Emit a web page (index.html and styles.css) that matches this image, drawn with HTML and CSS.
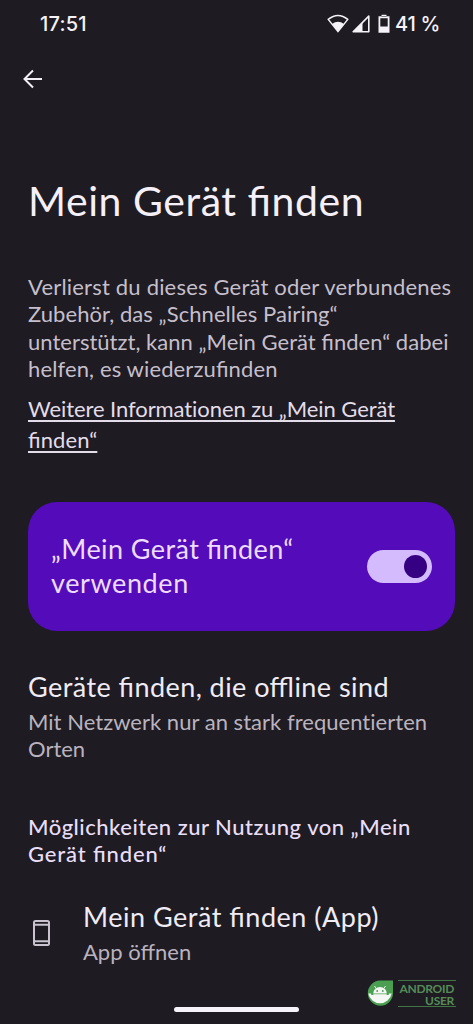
FILE: index.html
```
<!DOCTYPE html>
<html lang="de">
<head>
<meta charset="utf-8">
<title>Mein Gerät finden</title>
<link rel="stylesheet" href="styles.css">
</head>
<body>
<div class="screen">
  <header class="status">
    <span class="clock">17:51</span>
    <div class="status-right">
      <svg class="wifi" width="22" height="20" viewBox="0 0 22 20"><path d="M1.2 5.4Q11-2.6 20.8 5.4L11 17.6Z" fill="none" stroke="#f5f2f8" stroke-width="1.5" stroke-linejoin="round"/><path d="M5 9.9Q11 5.4 17 9.9L11 17.6Z" fill="#f5f2f8"/></svg>
      <svg class="signal" width="20" height="20" viewBox="0 0 20 20"><path d="M2.2 17.7L17.8 2.1V17.7Z" fill="none" stroke="#f5f2f8" stroke-width="1.6" stroke-linejoin="round"/><path d="M1.5 18L11.5 8.5V18Z" fill="#f5f2f8"/></svg>
      <svg class="battery" width="12" height="20" viewBox="0 0 12 20"><path d="M3.5 0.7h5v2h-5zM0.5 2.3h11v16.5h-11zM2.3 4.3v8.2h7.4V4.3z" fill="#f5f2f8" fill-rule="evenodd"/></svg>
      <span class="percent">41 %</span>
    </div>
  </header>
  <nav class="toolbar">
    <svg width="20" height="20" viewBox="0 0 20 20"><path d="M19 10H1.5M10 1.5L1.5 10L10 18.5" fill="none" stroke="#f2eff6" stroke-width="2"/></svg>
  </nav>
  <main>
    <h1 class="title"><span class="t1">Mein Gerät finden</span></h1>
    <p class="intro"><span class="i1">Verlierst du dieses Gerät oder verbundenes</span><br><span class="i2">Zubehör, das „Schnelles Pairing“</span><br><span class="i3">unterstützt, kann „Mein Gerät finden“ dabei</span><br><span class="i4">helfen, es wiederzufinden</span></p>
    <a class="more"><span class="l1">Weitere Informationen zu „Mein Gerät</span><br><span class="l2">finden“</span></a>
    <section class="card">
      <div class="card-text"><span class="c1">„Mein Gerät finden“</span><br><span class="c2">verwenden</span></div>
      <div class="switch"><div class="thumb"></div></div>
    </section>
    <section class="offline">
      <div class="item-title"><span class="o1">Geräte finden, die offline sind</span></div>
      <div class="item-sub"><span class="o2">Mit Netzwerk nur an stark frequentierten</span><br><span class="o3">Orten</span></div>
    </section>
    <h2 class="group"><span class="g1">Möglichkeiten zur Nutzung von „Mein</span><br><span class="g2">Gerät finden“</span></h2>
    <section class="app">
      <svg class="phone" width="17" height="26" viewBox="0 0 17 26"><rect x="1" y="1" width="15" height="24" rx="1.5" fill="none" stroke="#c8c3ce" stroke-width="2"/><path d="M1 4.7h15M1 21.2h15" stroke="#c8c3ce" stroke-width="1.9"/></svg>
      <div>
        <div class="item-title"><span class="a1">Mein Gerät finden (App)</span></div>
        <div class="item-sub"><span class="a2">App öffnen</span></div>
      </div>
    </section>
  </main>
  <div class="home-bar"></div>
  <div class="brand">
    <svg width="28" height="28" viewBox="0 0 28 28"><path d="M14 1.5H27V14.5A12.6 12.6 0 1 1 14 1.5Z" fill="#4a9f51"/><path d="M2.3 14.5h2.9v1.5h17.6v-1.5H25.7A11.9 11.9 0 0 1 2.3 14.5Z" fill="#f4f7f3"/><path d="M7.3 17V14A6.7 6 0 0 1 20.7 14V17Z" fill="#f4f7f3"/><path d="M10 9.2L8.5 7M18 9.2L19.5 7" stroke="#f4f7f3"/><path d="M6.7 14.8h14.6" stroke="#4a9f51" stroke-width=".7"/><circle cx="11.2" cy="12" r=".9" fill="#4a9f51"/><circle cx="16.8" cy="12" r=".9" fill="#4a9f51"/></svg>
    <div class="brand-name"><span>ANDROID</span><span>USER</span></div>
  </div>
</div>
</body>
</html>
```
FILE: styles.css
```
* { box-sizing: border-box; }
body { margin: 0; background: #1e1b22; font-family: Lato, "Open Sans", sans-serif; }
h1, h2, p { margin: 0; font-weight: 400; }
svg { display: block; flex: none; }
.screen { position: relative; width: 473px; height: 1024px; overflow: hidden; background: #1e1b22; color: #f0ecf5; white-space: nowrap; }
.status { display: flex; justify-content: space-between; height: 48px; padding: 0 33px 0 40px; align-items: center; }
.clock, .percent { font: 500 20px/24px Inter, sans-serif; color: #f5f2f8; }
.clock { letter-spacing: 0.2px; }
.percent { letter-spacing: -0.3px; margin-left: 5px; }
.status-right { display: flex; align-items: center; }
.signal { margin-left: 2px; }
.battery { margin-left: 7px; }
.toolbar { height: 127px; padding: 21px 0 0 23px; }
main { padding: 1px 18px 0 28px; }
.title { font-size: 41px; line-height: 50px; color: #f5f0f8; }
.intro { margin-top: 47px; font-size: 22px; line-height: 27.3px; color: #c5bfcc; }
.more { display: block; margin-top: 12px; font-size: 22px; line-height: 30.7px; color: #e3ddea; }
.more span { text-decoration: underline; text-decoration-thickness: 2px; text-underline-offset: 3px; text-decoration-skip-ink: none; }
.card { display: flex; align-items: center; justify-content: space-between; height: 128.5px; margin-top: 46.5px; padding: 0 23px 0 23px; border-radius: 29px; background: #540bb9; color: #eedcff; }
.card-text { font-size: 27px; line-height: 34.5px; }
.switch { display: flex; justify-content: flex-end; align-items: center; width: 65px; height: 33px; padding-right: 5px; border-radius: 17px; background: #d3bbfd; }
.thumb { width: 23px; height: 23px; border-radius: 50%; background: #360083; }
.offline { margin-top: 39px; }
.item-title { font-size: 27px; line-height: 34px; }
.item-sub { margin-top: 4px; font-size: 22px; line-height: 27.3px; color: #b9b3bf; }
.group { margin-top: 51px; font-size: 22px; line-height: 27.3px; font-weight: 500; color: #e8def8; }
.app { display: flex; margin-top: 32px; gap: 33px; padding-left: 5px; }
.app .phone { margin-top: 20px; }
.t1, .i3, .i4, .l2, .c1, .o1, .g2, .a1 { font-feature-settings: "liga" 1; }
.t1 { letter-spacing: 0.55px; }
.i1 { letter-spacing: 0.19px; }
.i2 { letter-spacing: 0.06px; }
.i3 { letter-spacing: 0.02px; }
.i4 { letter-spacing: 0.12px; }
.l1 { letter-spacing: -0.08px; }
.l2 { letter-spacing: 0.1px; }
.c1 { letter-spacing: 0.42px; }
.c2 { letter-spacing: 0.6px; }
.o1 { letter-spacing: 0.44px; }
.o2 { letter-spacing: 0.03px; }
.g1 { letter-spacing: 0.5px; }
.g2 { letter-spacing: 0.85px; }
.a1 { letter-spacing: 0.52px; }
.home-bar { position: absolute; left: 174px; top: 1007px; width: 125px; height: 5px; border-radius: 3px; background: #f7f3fa; }
.brand { position: absolute; left: 366px; top: 979px; display: flex; gap: 4px; }
.brand-name { display: flex; flex-direction: column; align-items: flex-end; width: 58px; height: 27px; margin-top: 1px; padding: 2px 2px 0 0; border-top: 1px solid #427546; border-bottom: 1px solid #427546; color: #568b57; font: 700 12px/11.5px Lato, sans-serif; letter-spacing: -0.3px; }
```
